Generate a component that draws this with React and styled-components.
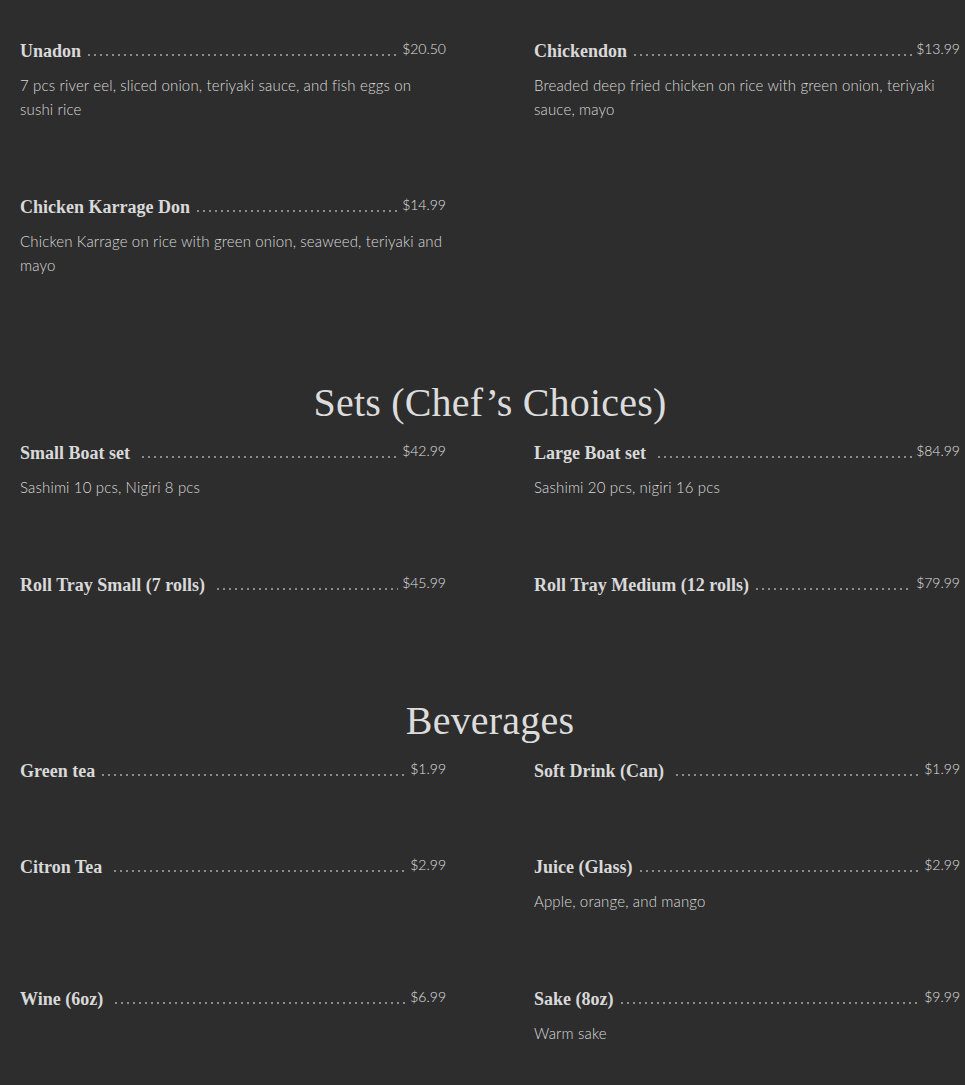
import React from 'react';
import styled, { createGlobalStyle } from 'styled-components';

const GlobalStyle = createGlobalStyle`
  html, body {
    margin: 0;
    padding: 0;
    background: #2d2d2d;
  }
`;

const Page = styled.main`
  background: #2d2d2d;
  min-height: 1085px;
  padding: 39px 5px 40px 20px;
  box-sizing: border-box;
`;

const Section = styled.section`
  & + & {
    margin-top: 100px;
  }
`;

const Heading = styled.h2`
  margin: 0 0 14px;
  font-family: 'Liberation Serif', 'DejaVu Serif', serif;
  font-weight: 400;
  font-size: 40px;
  line-height: 48px;
  letter-spacing: 0.2px;
  color: #dcdcdc;
  text-align: center;
`;

const Grid = styled.div`
  display: grid;
  grid-template-columns: 426px 426px;
  column-gap: 88px;
  row-gap: 72px;
  align-items: start;
`;

const Item = styled.div`
  display: flex;
  flex-direction: column;
`;

const TitleRow = styled.div`
  display: flex;
  align-items: flex-end;
  height: 24px;
`;

const Name = styled.h3`
  margin: 0;
  padding-right: ${p => (p.$wide ? 10 : 5)}px;
  font-family: 'Liberation Serif', 'DejaVu Serif', serif;
  font-weight: 700;
  font-size: 18px;
  line-height: 24px;
  color: #d9d9d9;
  white-space: nowrap;
`;

const Leader = styled.span`
  flex: 1;
  height: 2px;
  margin: 0 4px 7px 0;
  background-image: radial-gradient(circle, #8c8c8c 0.75px, transparent 1.15px);
  background-size: 6px 2px;
  background-repeat: repeat-x;
`;

const Price = styled.span`
  align-self: flex-start;
  font-family: Lato, 'Open Sans', sans-serif;
  font-weight: 300;
  font-size: 14px;
  line-height: 20px;
  color: #e0e0e0;
`;

const Desc = styled.p`
  margin: 10px 0 2px;
  font-family: Lato, 'Open Sans', sans-serif;
  font-weight: 300;
  font-size: 15px;
  line-height: 24px;
  letter-spacing: 0.15px;
  color: #dadada;
`;

const sections = [
  {
    items: [
      { name: 'Unadon', price: '$20.50', desc: '7 pcs river eel, sliced onion, teriyaki sauce, and fish eggs on sushi rice' },
      { name: 'Chickendon', price: '$13.99', desc: 'Breaded deep fried chicken on rice with green onion, teriyaki sauce, mayo' },
      { name: 'Chicken Karrage Don', price: '$14.99', desc: 'Chicken Karrage on rice with green onion, seaweed, teriyaki and mayo' },
    ],
  },
  {
    title: 'Sets (Chef’s Choices)',
    items: [
      { name: 'Small Boat set', price: '$42.99', desc: 'Sashimi 10 pcs, Nigiri 8 pcs', wide: true },
      { name: 'Large Boat set', price: '$84.99', desc: 'Sashimi 20 pcs, nigiri 16 pcs', wide: true },
      { name: 'Roll Tray Small (7 rolls)', price: '$45.99', wide: true },
      { name: 'Roll Tray Medium (12 rolls)', price: '$79.99' },
    ],
  },
  {
    title: 'Beverages',
    items: [
      { name: 'Green tea', price: '$1.99' },
      { name: 'Soft Drink (Can)', price: '$1.99', wide: true },
      { name: 'Citron Tea', price: '$2.99', wide: true },
      { name: 'Juice (Glass)', price: '$2.99', desc: 'Apple, orange, and mango' },
      { name: 'Wine (6oz)', price: '$6.99', wide: true },
      { name: 'Sake (8oz)', price: '$9.99', desc: 'Warm sake' },
    ],
  },
];

const MenuItem = ({ name, price, desc, wide }) => (
  <Item>
    <TitleRow>
      <Name $wide={wide}>{name}</Name>
      <Leader />
      <Price>{price}</Price>
    </TitleRow>
    {desc && <Desc>{desc}</Desc>}
  </Item>
);

export default function App() {
  return (
    <>
      <GlobalStyle />
      <Page>
        {sections.map((s, i) => (
          <Section key={i}>
            {s.title && <Heading>{s.title}</Heading>}
            <Grid>
              {s.items.map(item => (
                <MenuItem key={item.name} {...item} />
              ))}
            </Grid>
          </Section>
        ))}
      </Page>
    </>
  );
}
